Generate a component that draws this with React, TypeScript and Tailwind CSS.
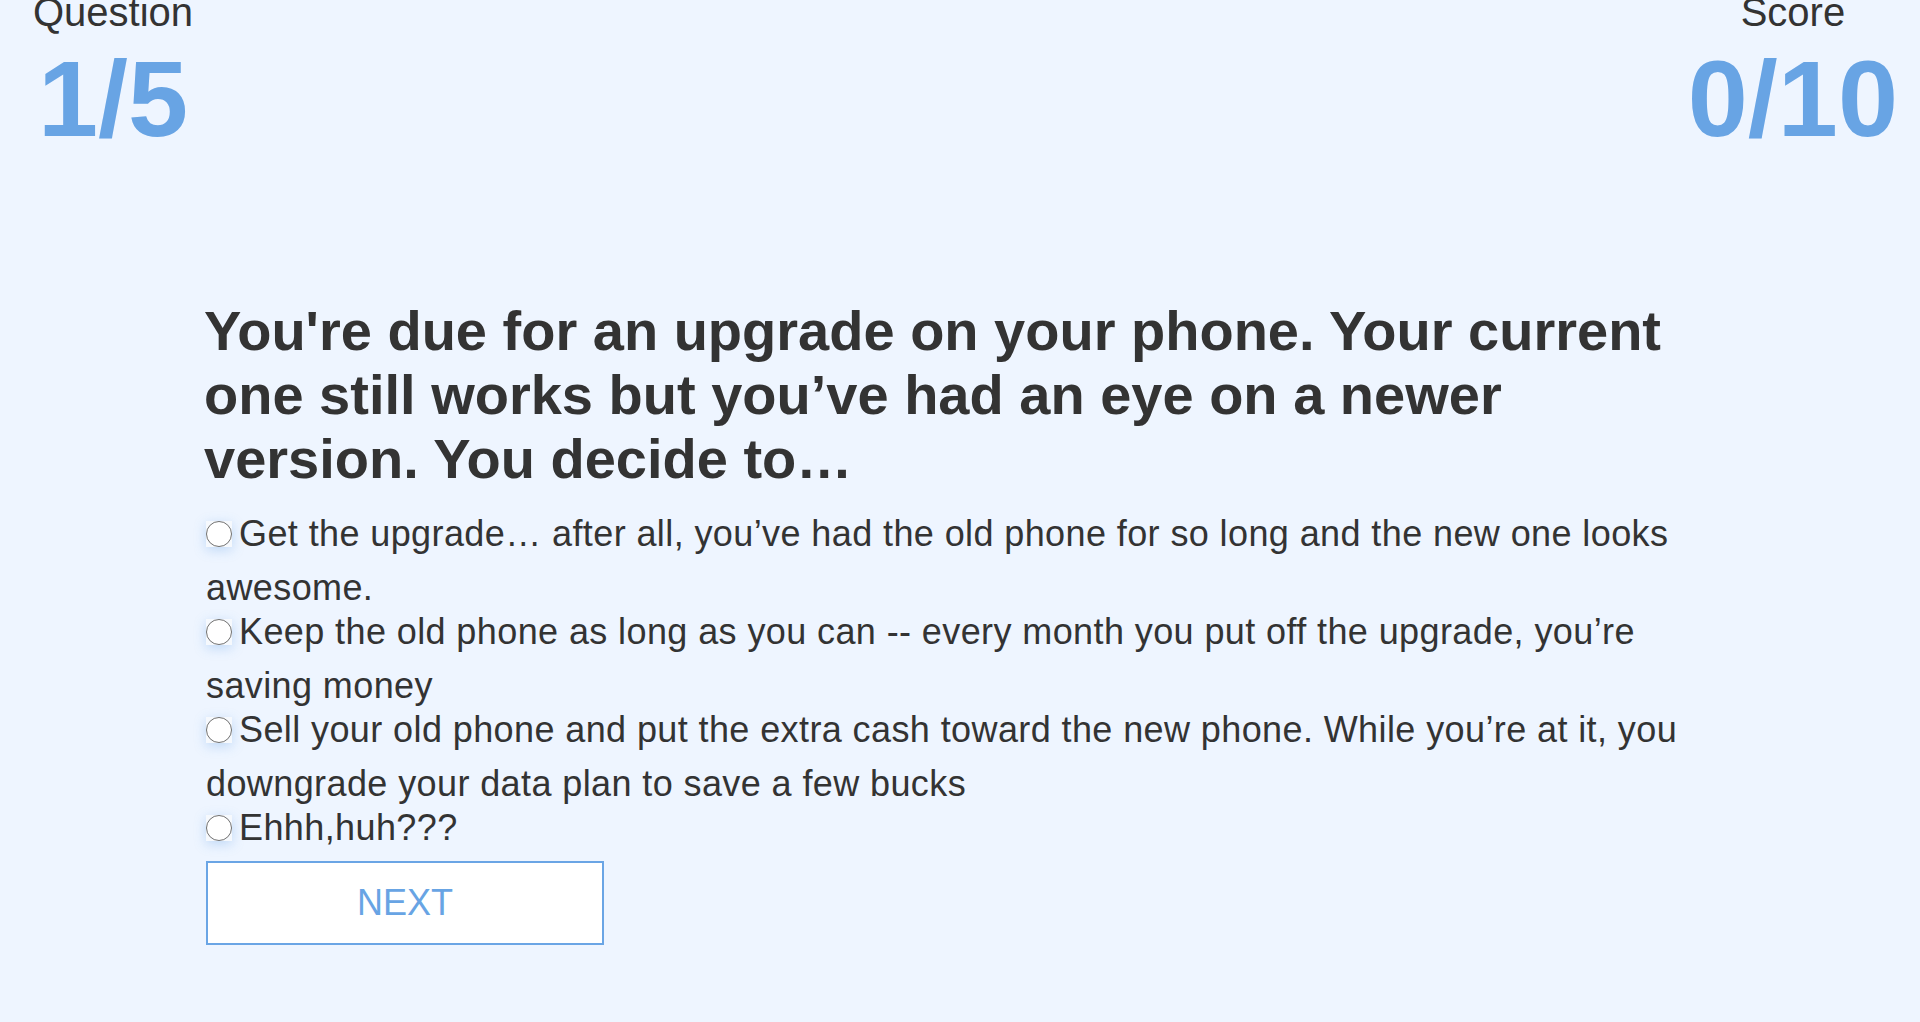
const options = [
  "Get the upgrade… after all, you’ve had the old phone for so long and the new one looks awesome.",
  "Keep the old phone as long as you can -- every month you put off the upgrade, you’re saving money",
  "Sell your old phone and put the extra cash toward the new phone. While you’re at it, you downgrade your data plan to save a few bucks",
  "Ehhh,huh???",
];

function Radio() {
  return (
    <span className="inline-block align-[-1px] w-[26px] h-[26px] mr-[7px] bg-[#f6f9fd] shadow-[0_3px_12px_rgba(104,164,228,0.35)]">
      <span className="block w-full h-full rounded-full border-[1.5px] border-[#707070] bg-white" />
    </span>
  );
}

function Stat({ label, value }: { label: string; value: string }) {
  return (
    <div className="flex flex-col items-center">
      <div className="text-[40px] leading-[24px] text-[#333333]">{label}</div>
      <div className="mt-[21px] text-[108px] leading-none font-bold text-[#68a4e4]">
        {value}
      </div>
    </div>
  );
}

export default function App() {
  return (
    <div
      className="min-h-[1022px] w-full bg-[#eef5ff] text-[#333333]"
      style={{ fontFamily: '"Liberation Sans", Arial, sans-serif' }}
    >
      <div className="flex justify-between pl-[33px] pr-[22px]">
        <Stat label="Question" value="1/5" />
        <Stat label="Score" value="0/10" />
      </div>

      <div className="w-[1508px] mx-auto mt-[146px]">
        <h1 className="text-[56px] leading-[64px] font-bold -ml-[2px]">
          You're due for an upgrade on your phone. Your current one still works but you’ve had an eye on a newer version. You decide to…
        </h1>

        <div className="mt-[16px] flex flex-col">
          {options.map((o, i) => (
            <label
              key={i}
              className={`block text-[36px] leading-[54px] tracking-[0.4px] cursor-pointer ${i > 0 ? "-mt-[10px]" : ""}`}
            >
              <Radio />
              {o}
            </label>
          ))}
        </div>

        <button className="mt-[6px] w-[398px] h-[84px] bg-white border-2 border-[#6aa5e5] text-[36px] text-[#68a4e4] flex items-center justify-center">
          NEXT
        </button>
      </div>
    </div>
  );
}
